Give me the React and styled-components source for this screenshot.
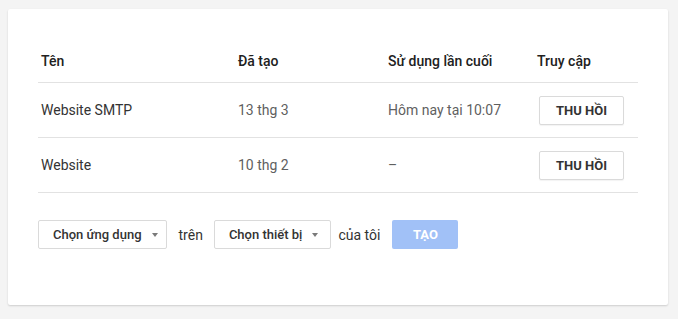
import React from "react";
import styled, { createGlobalStyle } from "styled-components";

const Global = createGlobalStyle`
  html, body { margin: 0; padding: 0; background: #f4f4f4; }
  body { font-family: Roboto, "Noto Sans", Arial, sans-serif; }
  #root { padding: 9px 10px 14px 8px; }
`;

const Card = styled.div`
  background: #fff;
  border-radius: 2px;
  box-shadow: 0 1px 2px rgba(0, 0, 0, 0.16);
  padding: 31px 30px 56px 30px;
`;

const Table = styled.table`
  width: 100%;
  border-collapse: collapse;
  table-layout: fixed;
`;

const Th = styled.th`
  text-align: left;
  font-size: 14px;
  font-weight: 500;
  color: #212121;
  height: 42px;
  padding: 0 0 0 3px;
  border-bottom: 1px solid #e2e2e2;
  vertical-align: middle;
`;

const Td = styled.td`
  font-size: 14px;
  color: ${(p) => (p.$muted ? "#5f5f5f" : "#333")};
  height: 54px;
  padding: 0 0 0 3px;
  border-bottom: 1px solid #e2e2e2;
  vertical-align: middle;
`;

const RevokeButton = styled.button`
  margin-left: 2px;
  height: 29px;
  width: 85px;
  background: #fff;
  border: 1px solid #dadada;
  border-radius: 2px;
  box-shadow: 0 1px 1px rgba(0, 0, 0, 0.05);
  font-family: inherit;
  font-size: 13px;
  font-weight: 700;
  color: #333;
  padding: 0;
  cursor: pointer;
`;

const Controls = styled.div`
  display: flex;
  align-items: center;
  margin-top: 27px;
`;

const Select = styled.div`
  display: flex;
  align-items: center;
  height: 29px;
  box-sizing: border-box;
  border: 1px solid #dadada;
  border-radius: 2px;
  padding: 0 ${(p) => p.$pr}px 0 14px;
  font-size: 13px;
  font-weight: 500;
  color: #333;
  gap: 10px;
`;

const Caret = styled.span`
  width: 0;
  height: 0;
  border-left: 3.5px solid transparent;
  border-right: 3.5px solid transparent;
  border-top: 4px solid #7a7a7a;
`;

const Word = styled.span`
  font-size: 14px;
  color: #333;
  margin: 0 ${(p) => p.$mr}px 0 ${(p) => p.$ml}px;
`;

const CreateButton = styled.button`
  height: 29px;
  width: 66px;
  border: none;
  border-radius: 2px;
  background: #a1c1f7;
  color: #fff;
  font-family: inherit;
  font-size: 13px;
  font-weight: 700;
  padding: 0;
`;

const rows = [
  { name: "Website SMTP", created: "13 thg 3", last: "Hôm nay tại 10:07" },
  { name: "Website", created: "10 thg 2", last: "–" },
];

export default function App() {
  return (
    <>
      <Global />
      <Card>
        <Table>
          <colgroup>
            <col style={{ width: 197 }} />
            <col style={{ width: 150 }} />
            <col style={{ width: 149 }} />
            <col />
          </colgroup>
          <thead>
            <tr>
              <Th>Tên</Th>
              <Th>Đã tạo</Th>
              <Th>Sử dụng lần cuối</Th>
              <Th>Truy cập</Th>
            </tr>
          </thead>
          <tbody>
            {rows.map((r) => (
              <tr key={r.name}>
                <Td>{r.name}</Td>
                <Td $muted>{r.created}</Td>
                <Td $muted>{r.last}</Td>
                <Td>
                  <RevokeButton>THU HỒI</RevokeButton>
                </Td>
              </tr>
            ))}
          </tbody>
        </Table>
        <Controls>
          <Select $pr={8}>
            Chọn ứng dụng <Caret />
          </Select>
          <Word $ml={12} $mr={11}>trên</Word>
          <Select $pr={12}>
            Chọn thiết bị <Caret />
          </Select>
          <Word $ml={7} $mr={12}>của tôi</Word>
          <CreateButton>TẠO</CreateButton>
        </Controls>
      </Card>
    </>
  );
}
